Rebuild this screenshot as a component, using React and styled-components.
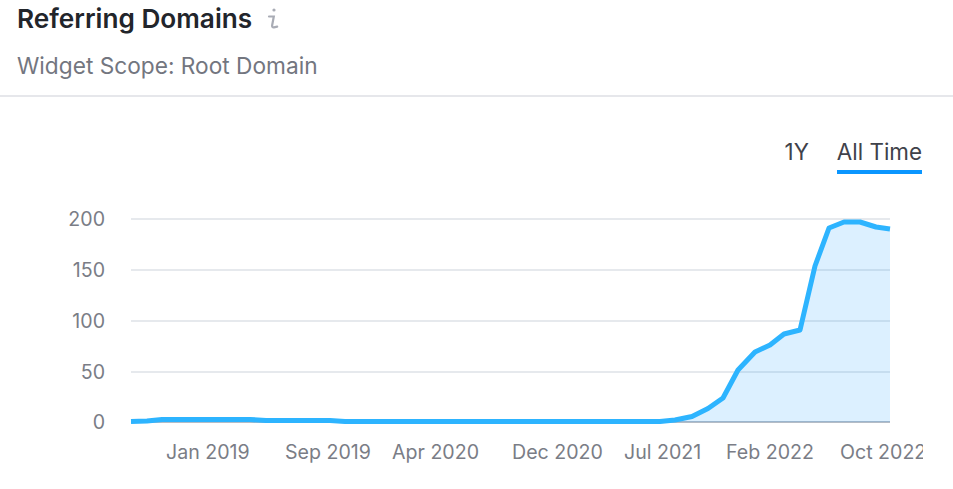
import React from "react";
import styled, { createGlobalStyle } from "styled-components";

const Global = createGlobalStyle`
  html, body { margin: 0; padding: 0; background: #fff; }
  body { font-family: Inter, "Liberation Sans", sans-serif; overflow: hidden; }
`;
const Page = styled.div`
  width: 953px; height: 489px; display: flex; flex-direction: column; overflow: hidden;
`;
const Header = styled.header`
  height: 97px; box-sizing: border-box; padding: 4px 17px 0;
  border-bottom: 2px solid #e6e7eb; flex: none;
`;
const TitleRow = styled.div`
  display: flex; align-items: center; gap: 15px; height: 30px;
`;
const Title = styled.h2`
  margin: 0; font-size: 26.2px; line-height: 30px; font-weight: 600; color: #22252b;
`;
const Sub = styled.div`
  margin-top: 18px; font-size: 22.7px; line-height: 28px; color: #73767f;
`;
const Tabs = styled.div`
  display: flex; justify-content: flex-end; gap: 28px; padding: 41px 31px 0 0; flex: none;
`;
const Tab = styled.div`
  font-size: 22.4px; line-height: 28px; color: #3f424a; padding-bottom: 4px;
  border-bottom: 4px solid ${p => (p.$active ? "#0a96ff" : "transparent")};
`;
const ChartSvg = styled.svg`
  display: block; position: absolute; left: 0; top: 0;
`;
const Tick = styled.text`
  font-family: Inter, "Liberation Sans", sans-serif; font-size: 19.6px; fill: #7a7d86;
`;

const pts = [[131,421.5],[147,421],[162,419.5],[250,419.5],[266,420.5],[330,420.5],[345,421.5],[660,421.5],[675,420],[692,416.5],[708,408.5],[723,398],[738,370],[755,352],[770,345],[784,334],[800,330],[815,266],[829,228],[844,222],[860,222],[876,227],[890,229]];
const line = pts.map(p => p.join(",")).join(" ");
const area = `131,422 ${line} 890,422`;
const grid = [[219,"200"],[270,"150"],[321,"100"],[372,"50"],[422,"0"]];
const xLabels = [["Jan 2019",166],["Sep 2019",285],["Apr 2020",392],["Dec 2020",512],["Jul 2021",624],["Feb 2022",726],["Oct 2022",840]];

function InfoIcon() {
  return (
    <svg width="12" height="24" viewBox="0 0 12 24" fill="none" stroke="#a9acb5" strokeWidth="2.2">
      <circle cx="7" cy="3" r="1.6" fill="#a9acb5" stroke="none" />
      <path d="M2 9.5h4.8l-1.7 9c-.2 1.2.5 2 1.9 1.8l3.2-.6" strokeLinecap="round" />
    </svg>
  );
}

export default function App() {
  return (
    <Page>
      <Global />
      <Header>
        <TitleRow>
          <Title>Referring Domains</Title>
          <InfoIcon />
        </TitleRow>
        <Sub>Widget Scope: Root Domain</Sub>
      </Header>
      <Tabs>
        <Tab>1Y</Tab>
        <Tab $active>All Time</Tab>
      </Tabs>
      <ChartSvg width="953" height="489" viewBox="0 0 953 489">
        {grid.map(([y, t]) => (
          <g key={t}>
            <line x1="131" x2="890" y1={y} y2={y} stroke={t === "0" ? "#b4bcc6" : "#e6e9ed"} strokeWidth="2" />
            <Tick x="105" y={y + 7} textAnchor="end">{t}</Tick>
          </g>
        ))}
        <polygon points={area} fill="#0a96ff" fillOpacity="0.14" />
        <polyline points={line} fill="none" stroke="#2db4ff" strokeWidth="5" strokeLinejoin="round" />
        <svg x="0" y="430" width="923" height="50">
          {xLabels.map(([t, x]) => <Tick key={t} x={x} y="29">{t}</Tick>)}
        </svg>
      </ChartSvg>
    </Page>
  );
}
